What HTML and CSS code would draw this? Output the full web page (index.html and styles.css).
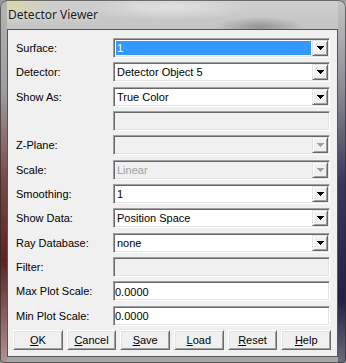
FILE: index.html
```html
<!DOCTYPE html>
<html lang="en">
<head>
    <meta charset="UTF-8">
    <title>Detector Viewer</title>
    <link rel="stylesheet" href="styles.css">
</head>
<body>
    <div class="window">
        <div class="titlebar">Detector Viewer</div>
        <div class="client">
            <div class="form">
                <label class="lbl">Surface:</label>
                <div class="combo"><span class="val sel">1</span><span class="drop"><svg width="7" height="4"><path d="M0 0h7l-3.5 4z"/></svg></span></div>

                <label class="lbl">Detector:</label>
                <div class="combo"><span class="val">Detector Object 5</span><span class="drop"><svg width="7" height="4"><path d="M0 0h7l-3.5 4z"/></svg></span></div>

                <label class="lbl">Show As:</label>
                <div class="combo"><span class="val">True Color</span><span class="drop"><svg width="7" height="4"><path d="M0 0h7l-3.5 4z"/></svg></span></div>

                <span class="lbl"></span>
                <div class="edit off"></div>

                <label class="lbl">Z-Plane:</label>
                <div class="combo off"><span class="val"></span><span class="drop"><svg width="7" height="4"><path d="M0 0h7l-3.5 4z"/></svg></span></div>

                <label class="lbl">Scale:</label>
                <div class="combo off"><span class="val">Linear</span><span class="drop"><svg width="7" height="4"><path d="M0 0h7l-3.5 4z"/></svg></span></div>

                <label class="lbl">Smoothing:</label>
                <div class="combo"><span class="val">1</span><span class="drop"><svg width="7" height="4"><path d="M0 0h7l-3.5 4z"/></svg></span></div>

                <label class="lbl">Show Data:</label>
                <div class="combo"><span class="val">Position Space</span><span class="drop"><svg width="7" height="4"><path d="M0 0h7l-3.5 4z"/></svg></span></div>

                <label class="lbl">Ray Database:</label>
                <div class="combo"><span class="val">none</span><span class="drop"><svg width="7" height="4"><path d="M0 0h7l-3.5 4z"/></svg></span></div>

                <label class="lbl">Filter:</label>
                <div class="edit off"></div>

                <label class="lbl">Max Plot Scale:</label>
                <div class="edit">0.0000</div>

                <label class="lbl">Min Plot Scale:</label>
                <div class="edit">0.0000</div>
            </div>
            <div class="buttons">
                <button><u>O</u>K</button>
                <button><u>C</u>ancel</button>
                <button><u>S</u>ave</button>
                <button><u>L</u>oad</button>
                <button><u>R</u>eset</button>
                <button><u>H</u>elp</button>
            </div>
        </div>
    </div>
</body>
</html>
```

FILE: styles.css
```css
body {
    margin: 0;
    background-color: #9a9a9a;
    font-family: "Liberation Sans", Arial, sans-serif;
    font-size: 11px;
    color: #000;
}
.window {
    width: 346px;
    height: 363px;
    box-sizing: border-box;
    padding: 0 8px 6px 7px;
    border-radius: 7px 7px 4px 4px;
    background:
        linear-gradient(to bottom, #b4b4b4 0, #9e9e9e 90px, #7a4848 180px, #5a2222 260px, #b09494 363px) left top / 7px 100% no-repeat,
        linear-gradient(to bottom, #c4c4c4 0, #8a8a96 90px, #3a3a58 180px, #22223c 300px, #6a6a80 363px) right top / 8px 100% no-repeat,
        radial-gradient(ellipse 40px 18px at 12px 4px, rgba(230, 220, 140, 0.55), transparent),
        radial-gradient(ellipse 45px 10px at 260px 27px, rgba(90, 90, 90, 0.45), transparent),
        radial-gradient(ellipse 80px 12px at 170px 8px, rgba(240, 240, 240, 0.6), transparent),
        linear-gradient(to bottom, #cfcfcf 0, #c4c4c4 28px, #a4a4a4 100%);
    box-shadow: inset 0 0 0 1px rgba(40, 40, 40, 0.6);
}
.titlebar {
    height: 29px;
    box-sizing: border-box;
    padding: 6px 0 0 1px;
    font-family: "Noto Sans", "Open Sans", sans-serif;
    font-size: 12px;
    color: #1c1c1c;
    text-shadow: 0 0 6px rgba(255, 255, 255, 0.8);
}
.client {
    height: 328px;
    box-sizing: border-box;
    background-color: #f0f0f0;
    border: 1px solid #555;
    padding: 8px 6px 0 8px;
}
.form {
    display: grid;
    grid-template-columns: 97px 217px;
    grid-auto-rows: 20px;
    row-gap: 4.34px;
}
.lbl {
    align-self: center;
    white-space: nowrap;
}
.combo, .edit {
    box-sizing: border-box;
    display: flex;
    align-items: stretch;
    background-color: #fff;
    border: 1px solid;
    border-color: #a0a0a0 #fff #fff #a0a0a0;
    box-shadow: inset 1px 1px #696969, inset -1px -1px #e3e3e3;
    padding: 1px;
}
.val {
    flex: 1;
    margin: 1px;
    padding-left: 1px;
    line-height: 14px;
}
.sel {
    background-color: #3399ff;
    color: #fff;
}
.drop {
    width: 16px;
    box-sizing: border-box;
    display: flex;
    align-items: center;
    justify-content: center;
    background-color: #f0f0f0;
    border: 1px solid;
    border-color: #e3e3e3 #696969 #696969 #e3e3e3;
    box-shadow: inset 1px 1px #fff, inset -1px -1px #a0a0a0;
}
.drop svg {
    fill: #000;
    shape-rendering: crispEdges;
}
.edit {
    align-items: center;
    padding: 1px 1px 0 1px;
}
.off {
    background-color: #f0f0f0;
    color: #a0a0a0;
}
.off .drop svg {
    fill: #a0a0a0;
}
.buttons {
    display: flex;
    gap: 4px;
    margin: 4px 0 0 -3px;
}
button {
    width: 50px;
    height: 20px;
    padding: 0;
    font-family: "Liberation Sans", Arial, sans-serif;
    font-size: 11px;
    color: #000;
    background-color: #f0f0f0;
    border: 1px solid;
    border-color: #fff #696969 #696969 #fff;
    box-shadow: inset 1px 1px #e3e3e3, inset -1px -1px #a0a0a0;
}
```
